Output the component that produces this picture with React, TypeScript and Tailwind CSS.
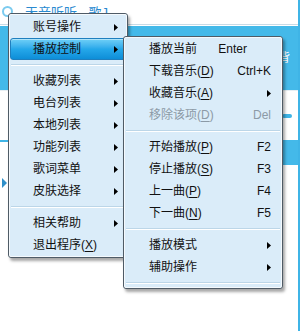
import React from "react";

type Item =
  | { sep: true }
  | {
      sep?: false;
      label: string;
      key?: string;
      shortcut?: string;
      sub?: boolean;
      disabled?: boolean;
      active?: boolean;
    };

const mainItems: Item[] = [
  { label: "账号操作", sub: true },
  { label: "播放控制", sub: true, active: true },
  { sep: true },
  { label: "收藏列表", sub: true },
  { label: "电台列表", sub: true },
  { label: "本地列表", sub: true },
  { label: "功能列表", sub: true },
  { label: "歌词菜单", sub: true },
  { label: "皮肤选择", sub: true },
  { sep: true },
  { label: "相关帮助", sub: true },
  { label: "退出程序", key: "X" },
];

const playItems: Item[] = [
  { label: "播放当前", shortcut: "Enter" },
  { label: "下载音乐", key: "D", shortcut: "Ctrl+K" },
  { label: "收藏音乐", key: "A", sub: true },
  { label: "移除该项", key: "D", shortcut: "Del", disabled: true },
  { sep: true },
  { label: "开始播放", key: "P", shortcut: "F2" },
  { label: "停止播放", key: "S", shortcut: "F3" },
  { label: "上一曲", key: "P", shortcut: "F4" },
  { label: "下一曲", key: "N", shortcut: "F5" },
  { sep: true },
  { label: "播放模式", sub: true },
  { label: "辅助操作", sub: true },
];

function Arrow() {
  return (
    <svg width="4" height="7" viewBox="0 0 4 7" className="shrink-0">
      <polygon points="0,0 4,3.5 0,7" fill="#000" />
    </svg>
  );
}

function Separator({ h = "h-[10px]" }: { h?: string }) {
  return (
    <div className={h + " flex flex-col justify-center px-[2px]"}>
      <div className="h-px bg-[#bcd6e8]" />
      <div className="h-px bg-white" />
    </div>
  );
}

function MenuRow({ item, textLeft, right }: { item: Item; textLeft: number; right: number }) {
  if (item.sep) return <Separator />;
  const tone = item.disabled ? "text-[#8c9aa6]" : "text-[#111]";
  return (
    <div
      className={
        "relative h-[22px] flex items-center mx-[1px] " +
        (item.active
          ? "rounded-[3px] border border-[#1f7fbf] bg-gradient-to-b from-[#6fd0f7] via-[#25a8ea] to-[#0d8ed8] shadow-[inset_0_1px_0_rgba(255,255,255,0.45)]"
          : "border border-transparent")
      }
      style={{ paddingLeft: textLeft, paddingRight: right }}
    >
      <span className={"flex-1 " + tone}>
        {item.label}
        {item.key && (
          <>
            (<span className="underline underline-offset-2">{item.key}</span>)
          </>
        )}
      </span>
      {item.shortcut && (
        <span className={tone + (item.shortcut === "Enter" ? " pr-[24px]" : "")}>{item.shortcut}</span>
      )}
      {item.sub && <Arrow />}
    </div>
  );
}

export default function App() {
  return (
    <div
      className="relative w-[302px] h-[331px] overflow-hidden bg-white text-[12px] leading-[22px]"
      style={{ fontFamily: '"Liberation Sans", "Noto Sans CJK SC", sans-serif' }}
    >
      {/* app window behind the menu */}
      <div className="flex flex-col h-full border-r-[2px] border-r-[#3fb4e6] mr-[2px]">
        <div className="h-[25px] flex items-start gap-[12px] pl-[2px] pt-[6px] border-b border-[#c9dbe6]">
          <div className="w-[11px] h-[11px] rounded-full border-[2px] border-[#7ccbef] bg-white" />
          <span className="text-[#2a8ad0] text-[13px] leading-[14px]">天音听听 - 歌J</span>
        </div>
        <div className="h-[64px] mt-px bg-[#44b9e9] flex justify-end items-center pr-[8px] text-white text-[12px]">
          背
        </div>
        <div className="h-[50px] flex justify-end items-center pr-[6px] border-t border-[#e6eef3]">
          <div className="w-[10px] h-[4px] rounded-full bg-[#3fb4e6]" />
        </div>
        <div className="h-[25px] flex">
          <div className="w-[128px] h-[2px] bg-[#3fb4e6]" />
          <div className="flex-1 bg-[#44b9e9]" />
        </div>
        <div className="flex-1 relative">
          <svg width="5" height="10" viewBox="0 0 5 10" className="absolute left-[2px] top-[13px]">
            <polygon points="0,0 5,5 0,10" fill="#2f8fc9" />
          </svg>
        </div>
      </div>

      {/* main context menu */}
      <div className="absolute left-[8px] top-[13px] w-[120px] pt-[2px] pb-[1px] rounded-[3px] border border-[#4f5b66] bg-[#daecf9] shadow-[2px_3px_3px_rgba(0,0,0,0.35)]">
        <div className="absolute inset-0 rounded-[2px] border border-white/70 pointer-events-none" />
        {mainItems.map((item, i) => (
          <MenuRow key={i} item={item} textLeft={22} right={7} />
        ))}
      </div>

      {/* play control submenu */}
      <div className="absolute left-[123px] top-[36px] w-[160px] pt-[1px] pb-[1px] rounded-[3px] border border-[#4f5b66] bg-[#daecf9] shadow-[2px_3px_3px_rgba(0,0,0,0.35)]">
        <div className="absolute inset-0 rounded-[2px] border border-white/70 pointer-events-none" />
        {playItems.map((item, i) => (
          <MenuRow key={i} item={item} textLeft={23} right={9} />
        ))}
        <Separator h="h-[9px]" />
      </div>
    </div>
  );
}
